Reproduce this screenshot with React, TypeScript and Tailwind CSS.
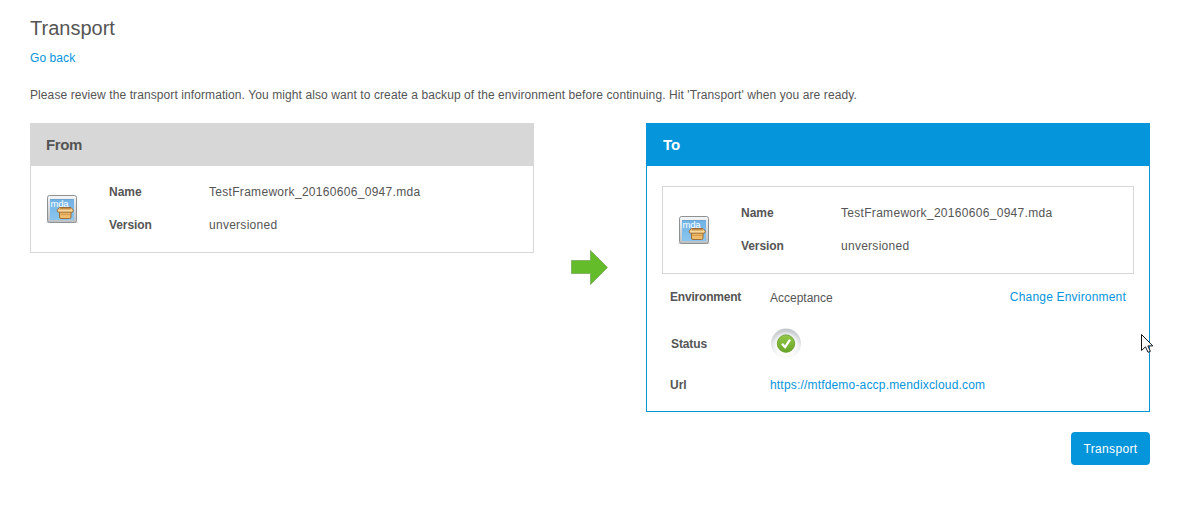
import React from "react";

function MdaIcon() {
  return (
    <svg width="32" height="30" viewBox="0 0 32 30" className="block shrink-0">
      <defs>
        <linearGradient id="frame" x1="0" y1="0" x2="0" y2="1">
          <stop offset="0" stopColor="#f4f6f8" />
          <stop offset="1" stopColor="#bcbfc2" />
        </linearGradient>
        <linearGradient id="screen" x1="0" y1="0" x2="0" y2="1">
          <stop offset="0" stopColor="#70b2e4" />
          <stop offset="1" stopColor="#8ac5ef" />
        </linearGradient>
        <linearGradient id="box" x1="0" y1="0" x2="0" y2="1">
          <stop offset="0" stopColor="#e9b265" />
          <stop offset="1" stopColor="#f3c071" />
        </linearGradient>
      </defs>
      <path d="M0 28.500h32" stroke="#dcdcdc" />
      <rect x="1.500" y="1.500" width="29" height="27" rx="2" fill="url(#frame)" stroke="#8d9194" />
      <rect x="4" y="5" width="24" height="21" fill="url(#screen)" />
      <path d="M4 5.500h24" stroke="#6ba0c9" fill="none" opacity=".7" />
      <text x="4.500" y="13" fill="#fff" fontSize="9.500" fontFamily="Liberation Sans, sans-serif" textLength="18">mda</text>
      <path d="M13.500 17v6q0 1.500 1.500 1.500h8.500q1.500 0 1.500-1.500v-6z" fill="url(#box)" stroke="#9c6426" strokeWidth=".9" />
      <path d="M13.500 13.500h11.500l2.300 2.600q.2 2.100-1.600 2.100H12.800q-1.900 0-1.600-2.100z" fill="#fbd99b" stroke="#95612a" strokeWidth=".9" strokeLinejoin="round" />
      <path d="M14 14h10.500l.8 1.500H13.200z" fill="#c28c4b" />
      <path d="M14.500 20.500h9.500" stroke="#cf9144" opacity=".7" />
    </svg>
  );
}

function PackageInfo() {
  return (
    <div className="flex h-[86px] pl-[15px]">
      <div className="w-[63px] pt-[28px]">
        <MdaIcon />
      </div>
      <dl className="grid grid-cols-[100px_1fr] grid-rows-[33px_33px] pt-[10px] leading-[33px]">
        <dt className="font-bold">Name</dt>
        <dd className="tracking-[0.3px]">TestFramework_20160606_0947.mda</dd>
        <dt className="font-bold tracking-[-0.08px]">Version</dt>
        <dd className="tracking-[0.27px]">unversioned</dd>
      </dl>
    </div>
  );
}

function StatusIcon() {
  return (
    <svg width="32" height="32" viewBox="0 0 32 32" className="block">
      <defs>
        <linearGradient id="ring" x1="0" y1="0" x2="0" y2="1">
          <stop offset="0" stopColor="#c3c8cc" />
          <stop offset=".5" stopColor="#e2e4e6" />
          <stop offset="1" stopColor="#fafafa" />
        </linearGradient>
        <radialGradient id="glow">
          <stop offset=".6" stopColor="#fff" />
          <stop offset="1" stopColor="#fff" stopOpacity="0" />
        </radialGradient>
        <linearGradient id="green" x1="0" y1="0" x2="0" y2="1">
          <stop offset="0" stopColor="#93c846" />
          <stop offset="1" stopColor="#68a525" />
        </linearGradient>
      </defs>
      <circle cx="16" cy="15.500" r="15" fill="url(#ring)" />
      <circle cx="16" cy="17" r="14" fill="url(#glow)" />
      <circle cx="16" cy="15.600" r="8.700" fill="url(#green)" stroke="#649c2c" strokeWidth=".9" />
      <path d="M12 15.800l3.100 3.300 4.900-7.500" fill="none" stroke="#fff" strokeWidth="2.300" />
    </svg>
  );
}

export default function App() {
  return (
    <main className="relative h-[519px] w-[1180px] overflow-hidden bg-white px-[30px] pt-[14px] font-['Liberation_Sans',Arial,sans-serif] text-[12px] text-[#555]">
      <h1 className="h-7 text-[20px] leading-7">Transport</h1>
      <a href="#" className="mt-[6px] block h-5 w-fit leading-5 tracking-[0.08px] text-[#0595db]">Go back</a>
      <p className="mt-[17px] h-5 leading-5 tracking-[0.09px] whitespace-nowrap">
        Please review the transport information. You might also want to create a backup of the environment before continuing. Hit 'Transport' when you are ready.
      </p>
      <div className="mt-[18px] flex items-start">
        <section className="h-[130px] w-[504px] border border-[#d7d7d7]">
          <h2 className="h-[42px] bg-[#d7d7d7] pl-[15px] text-[15px] leading-[42px] font-bold tracking-[-0.4px]">From</h2>
          <PackageInfo />
        </section>
        <div className="flex w-28 justify-center pt-[126px]">
          <svg width="40" height="38" viewBox="0 0 40 38">
            <path d="M1.500 11.500h19v-10L37.500 18.500 20.500 35.500v-11h-19z" fill="#65bc2b" stroke="#78a85a" strokeWidth=".8" />
          </svg>
        </div>
        <section className="h-[289px] w-[504px] border border-[#0595db]">
          <h2 className="h-[42px] bg-[#0595db] pl-4 text-[15px] leading-[42px] font-bold text-white">To</h2>
          <div className="mx-[15px] mt-5 h-[88px] border border-[#d7d7d7]">
            <PackageInfo />
          </div>
          <div className="grid grid-cols-[100px_1fr_auto] grid-rows-[46px_48px_34px] items-center pr-[23px] pl-[23px]">
            <b className="tracking-[-0.2px]">Environment</b>
            <span className="pt-[2px]">Acceptance</span>
            <a href="#" className="tracking-[0.19px] text-[#0595db]">Change Environment</a>
            <b className="pl-px tracking-[-0.1px]">Status</b>
            <div className="col-span-2"><StatusIcon /></div>
            <b>Url</b>
            <a href="#" className="col-span-2 tracking-[0.18px] text-[#0595db]">https://mtfdemo-accp.mendixcloud.com</a>
          </div>
        </section>
      </div>
      <div className="mt-5 flex justify-end">
        <button className="h-[33px] w-[79px] rounded-[4px] bg-[#0595db] tracking-[0.33px] text-white">Transport</button>
      </div>
      <svg className="absolute top-[334px] left-[1141px]" width="13" height="20" viewBox="0 0 13 20">
        <path d="M.5.500v16l4-3.700 2.500 5.500 2.400-1-2.500-5.400h4.900z" fill="#fff" stroke="#15151d" />
      </svg>
    </main>
  );
}
